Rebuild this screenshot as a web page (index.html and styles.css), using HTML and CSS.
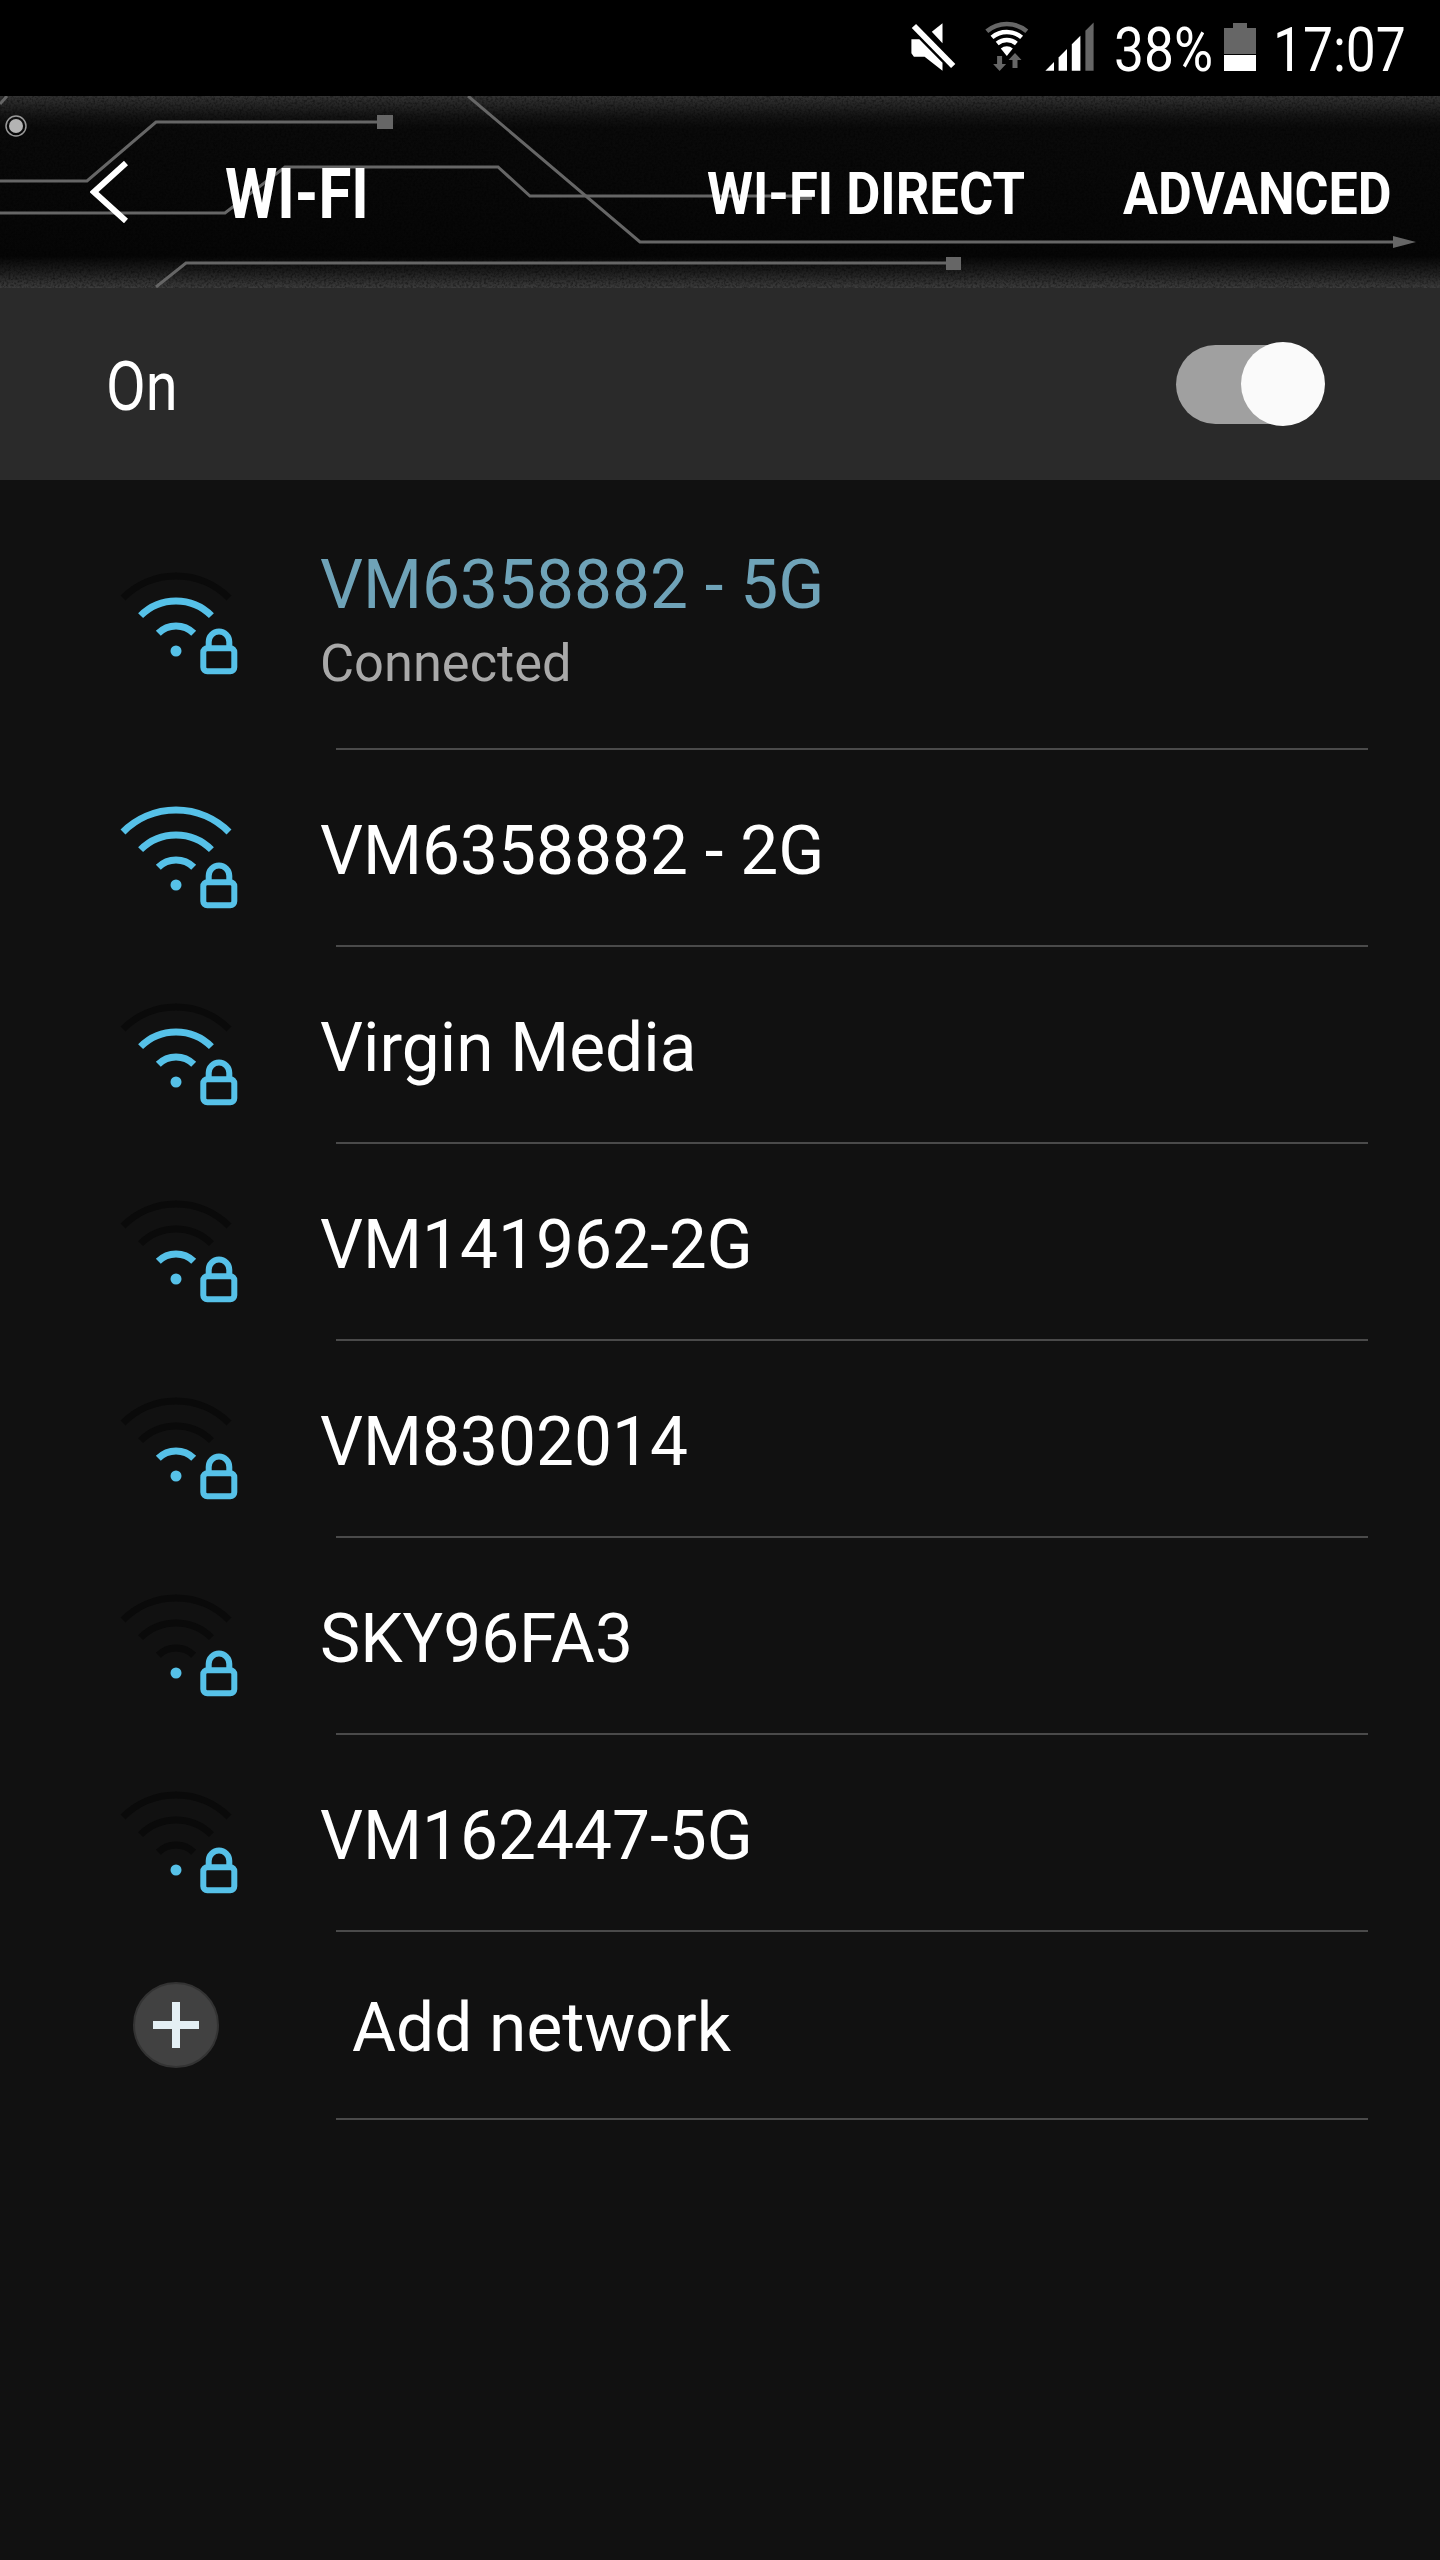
FILE: index.html
```html
<!DOCTYPE html>
<html lang="en">
<head>
  <meta charset="UTF-8">
  <title>Wi-Fi</title>
  <link rel="stylesheet" href="styles.css">
</head>
<body>
  <div class="status-bar">
    <svg class="st-mute" viewBox="0 0 50 54">
      <path class="white" d="M3.4 19.3H11.3L34.5 42.7V50.7L16.6 36.7H5.9L3.4 33.3Z"/>
      <path class="white" d="M23.8 11.7L34.5 3.3V23.3Z"/>
      <path class="slash" d="M5.9 6L45.2 46"/>
    </svg>
    <svg class="st-wifi" viewBox="0 0 48 54">
      <path class="arc-dim" d="M1.8 11.3A31 31 0 0 1 41.8 11.3"/>
      <path class="arc-lit" d="M7 17.4A23 23 0 0 1 36.6 17.4"/>
      <path class="arc-lit" d="M12.2 23.5A15 15 0 0 1 31.4 23.5"/>
      <path class="white" d="M21.8 36L15.8 28.5A9 9 0 0 1 27.8 28.5Z"/>
      <path class="dim" d="M14.6 51l-6.5-7h4v-8h5v8h4Z"/>
      <path class="dim" d="M30 33l6.5 7h-4v8h-5v-8h-4Z"/>
    </svg>
    <svg class="st-signal" viewBox="0 0 50 50">
      <path class="white" d="M0.4 48.7L9 40V48.7Z"/>
      <path class="white" d="M13.6 35.5L22 27V48.7H13.6Z"/>
      <path class="white" d="M26.8 22.3L35.4 13.7V48.7H26.8Z"/>
      <path class="dim" d="M40.4 8.7L48.6 0.5V48.7H40.4Z"/>
    </svg>
    <span class="st-text st-percent">38%</span>
    <svg class="st-battery" viewBox="0 0 32 48">
      <rect class="dim" x="9" y="0" width="14" height="5"/>
      <rect class="dim" x="0" y="5" width="32" height="26"/>
      <rect class="white" x="0" y="32" width="32" height="16"/>
    </svg>
    <span class="st-text st-time">17:07</span>
  </div>

  <div class="header">
    <svg class="circuit" viewBox="0 0 1440 192">
      <filter id="grain">
        <feTurbulence type="fractalNoise" baseFrequency=".45" numOctaves="2"/>
        <feColorMatrix values="0 0 0 0 0  0 0 0 0 0  0 0 0 0 0  0 0 0 2 -0.8"/>
      </filter>
      <rect class="grain" width="1440" height="192" filter="url(#grain)"/>
      <path d="M393 26H156L87 85H0"/>
      <path d="M0 117H225L285 71H498L530 100H812"/>
      <path d="M468 0L640 146H1393"/>
      <path d="M156 191L186 167H946"/>
      <path d="M0 8L7 0"/>
      <rect x="377" y="19" width="16" height="14"/>
      <rect x="946" y="161" width="15" height="13"/>
      <rect x="800" y="96" width="12" height="8"/>
      <polygon points="1393,140 1416,146 1393,152"/>
      <circle class="ring" cx="16" cy="30" r="10"/>
      <circle class="core" cx="16" cy="30" r="7"/>
    </svg>
    <svg class="back" viewBox="0 0 38 62"><path d="M36 2L4 31L36 60"/></svg>
    <span class="title">WI-FI</span>
    <span class="action action-direct">WI-FI DIRECT</span>
    <span class="action action-advanced">ADVANCED</span>
  </div>

  <div class="switch-bar">
    <span class="switch-label">On</span>
    <div class="toggle"><div class="toggle-knob"></div></div>
  </div>

  <div class="list">
    <div class="row row-connected">
      <svg class="wifi" viewBox="0 0 130 134">
        <path class="off" d="M13 51A75 75 0 0 1 119 51"/>
        <path class="on" d="M30.6 68.6A50 50 0 0 1 101.4 68.6"/>
        <path class="on" d="M48.3 86.3A25 25 0 0 1 83.7 86.3"/>
        <circle cx="66" cy="104" r="5.5"/>
        <path class="on thin" d="M98.7 101V94.9A10.3 10.3 0 0 1 119.3 94.9V101"/>
        <rect class="on thin" x="93.3" y="101.3" width="31" height="23" rx="4"/>
      </svg>
      <div class="row-text">
        <div class="name name-connected">VM6358882 - 5G</div>
        <div class="sub">Connected</div>
      </div>
    </div>
    <hr class="sep">
    <div class="row">
      <svg class="wifi" viewBox="0 0 130 134">
        <path class="on" d="M13 51A75 75 0 0 1 119 51"/>
        <path class="on" d="M30.6 68.6A50 50 0 0 1 101.4 68.6"/>
        <path class="on" d="M48.3 86.3A25 25 0 0 1 83.7 86.3"/>
        <circle cx="66" cy="104" r="5.5"/>
        <path class="on thin" d="M98.7 101V94.9A10.3 10.3 0 0 1 119.3 94.9V101"/>
        <rect class="on thin" x="93.3" y="101.3" width="31" height="23" rx="4"/>
      </svg>
      <div class="name">VM6358882 - 2G</div>
    </div>
    <hr class="sep">
    <div class="row">
      <svg class="wifi" viewBox="0 0 130 134">
        <path class="off" d="M13 51A75 75 0 0 1 119 51"/>
        <path class="on" d="M30.6 68.6A50 50 0 0 1 101.4 68.6"/>
        <path class="on" d="M48.3 86.3A25 25 0 0 1 83.7 86.3"/>
        <circle cx="66" cy="104" r="5.5"/>
        <path class="on thin" d="M98.7 101V94.9A10.3 10.3 0 0 1 119.3 94.9V101"/>
        <rect class="on thin" x="93.3" y="101.3" width="31" height="23" rx="4"/>
      </svg>
      <div class="name">Virgin Media</div>
    </div>
    <hr class="sep">
    <div class="row">
      <svg class="wifi" viewBox="0 0 130 134">
        <path class="off" d="M13 51A75 75 0 0 1 119 51"/>
        <path class="off" d="M30.6 68.6A50 50 0 0 1 101.4 68.6"/>
        <path class="on" d="M48.3 86.3A25 25 0 0 1 83.7 86.3"/>
        <circle cx="66" cy="104" r="5.5"/>
        <path class="on thin" d="M98.7 101V94.9A10.3 10.3 0 0 1 119.3 94.9V101"/>
        <rect class="on thin" x="93.3" y="101.3" width="31" height="23" rx="4"/>
      </svg>
      <div class="name">VM141962-2G</div>
    </div>
    <hr class="sep">
    <div class="row">
      <svg class="wifi" viewBox="0 0 130 134">
        <path class="off" d="M13 51A75 75 0 0 1 119 51"/>
        <path class="off" d="M30.6 68.6A50 50 0 0 1 101.4 68.6"/>
        <path class="on" d="M48.3 86.3A25 25 0 0 1 83.7 86.3"/>
        <circle cx="66" cy="104" r="5.5"/>
        <path class="on thin" d="M98.7 101V94.9A10.3 10.3 0 0 1 119.3 94.9V101"/>
        <rect class="on thin" x="93.3" y="101.3" width="31" height="23" rx="4"/>
      </svg>
      <div class="name">VM8302014</div>
    </div>
    <hr class="sep">
    <div class="row">
      <svg class="wifi" viewBox="0 0 130 134">
        <path class="off" d="M13 51A75 75 0 0 1 119 51"/>
        <path class="off" d="M30.6 68.6A50 50 0 0 1 101.4 68.6"/>
        <path class="off" d="M48.3 86.3A25 25 0 0 1 83.7 86.3"/>
        <circle cx="66" cy="104" r="5.5"/>
        <path class="on thin" d="M98.7 101V94.9A10.3 10.3 0 0 1 119.3 94.9V101"/>
        <rect class="on thin" x="93.3" y="101.3" width="31" height="23" rx="4"/>
      </svg>
      <div class="name">SKY96FA3</div>
    </div>
    <hr class="sep">
    <div class="row">
      <svg class="wifi" viewBox="0 0 130 134">
        <path class="off" d="M13 51A75 75 0 0 1 119 51"/>
        <path class="off" d="M30.6 68.6A50 50 0 0 1 101.4 68.6"/>
        <path class="off" d="M48.3 86.3A25 25 0 0 1 83.7 86.3"/>
        <circle cx="66" cy="104" r="5.5"/>
        <path class="on thin" d="M98.7 101V94.9A10.3 10.3 0 0 1 119.3 94.9V101"/>
        <rect class="on thin" x="93.3" y="101.3" width="31" height="23" rx="4"/>
      </svg>
      <div class="name">VM162447-5G</div>
    </div>
    <hr class="sep">
    <div class="row row-add">
      <div class="add-icon"><div class="add-plus"></div></div>
      <div class="name name-add">Add network</div>
    </div>
    <hr class="sep">
  </div>
</body>
</html>
```

FILE: styles.css
```css
html, body { margin: 0; padding: 0; height: 2560px; overflow: hidden; background: #111; font-family: Roboto, sans-serif; color: #fff; }

.status-bar { height: 96px; box-sizing: border-box; background: #000; display: flex; align-items: center; justify-content: flex-end; padding: 0 37px 2px 0; }
.status-bar svg { display: block; flex: none; }
.white { fill: #fff; }
.dim { fill: #666; }
.slash { stroke: #fff; stroke-width: 6; fill: none; }
.arc-dim { stroke: #666; stroke-width: 4.5; fill: none; }
.arc-lit { stroke: #fff; stroke-width: 4.5; fill: none; }
.st-mute { width: 50px; height: 54px; }
.st-wifi { width: 48px; height: 54px; margin-left: 27px; }
.st-signal { width: 50px; height: 50px; margin-left: 12px; }
.st-battery { width: 32px; height: 48px; margin-left: 15px; }
.st-text { display: block; flex: none; font-size: 62px; line-height: 60px; margin-top: 6px; white-space: nowrap; transform: translateX(-3px) scaleX(.86); transform-origin: left center; }
.st-percent { width: 92px; margin-left: 22px; }
.st-time { width: 127px; margin-left: 20px; }

.header { position: relative; height: 192px; display: flex; align-items: center; background: linear-gradient(#323232 0, #141414 20px, #0a0a0a 32px, #060606 160px, #1c1c1c 175px, #3c3c3c 192px); font-weight: bold; }
.circuit { position: absolute; left: 0; top: 0; width: 1440px; height: 192px; }
.circuit path { stroke: #666; stroke-width: 3; fill: none; }
.circuit rect, .circuit polygon { fill: #666; }
.circuit .grain { fill: #000; opacity: .5; }
.circuit .ring { fill: none; stroke: #999; stroke-width: 1.5; }
.circuit .core { fill: #b4b4b4; }
.back { position: relative; width: 38px; height: 62px; margin-left: 90px; flex: none; }
.back path { stroke: #fff; stroke-width: 6; fill: none; }
.title, .action { position: relative; display: block; flex: none; padding-top: 3px; white-space: nowrap; transform-origin: left center; }
.title { font-size: 70px; width: 141px; margin-left: 97px; transform: scaleX(.855); }
.action { font-size: 59px; }
.action-direct { width: 316px; margin-left: 341px; transform: scaleX(.89); }
.action-advanced { width: 268px; margin-left: 100px; transform: scaleX(.88); }

.switch-bar { height: 192px; box-sizing: border-box; background: #2a2a2a; display: flex; align-items: center; justify-content: space-between; padding: 0 120px 0 106px; }
.switch-label { display: block; width: 70px; padding-top: 5px; font-size: 68px; transform: scaleX(.85); transform-origin: left center; }
.toggle { position: relative; width: 144px; height: 79px; border-radius: 40px; background: #a0a0a0; }
.toggle-knob { position: absolute; right: -5px; top: -3px; width: 84px; height: 84px; border-radius: 50%; background: #fafafa; }

.row { height: 195px; display: flex; align-items: center; padding-left: 110px; }
.row-connected { height: 268px; }
.wifi { display: block; flex: none; width: 130px; height: 134px; fill: #56c1e8; }
.wifi path, .wifi rect { fill: none; stroke-width: 7; }
.wifi .on { stroke: #56c1e8; }
.wifi .off { stroke: #0a0a0a; }
.wifi .thin { stroke-width: 6; }
.name { font-size: 67.6px; line-height: 78px; margin-left: 80px; white-space: nowrap; }
.row > .name { padding-top: 7px; }
.row-text { padding-top: 20px; }
.name-connected { color: #6fa3b8; }
.sub { margin-left: 80px; font-size: 52.4px; line-height: 78px; color: #a9a9a9; }
.sep { height: 2px; border: 0; margin: 0 72px 0 336px; background: #4a4a4a; }
.row-add { height: 186px; }
.add-icon { flex: none; width: 86px; height: 86px; box-sizing: border-box; margin-left: 23px; border: 2px solid #333; border-radius: 50%; background: #414141; position: relative; }
.add-plus { position: absolute; left: 18px; top: 37px; width: 46px; height: 8px; background: #e4eff4; }
.add-plus::after { content: ""; position: absolute; left: 19px; top: -19px; width: 8px; height: 46px; background: #e4eff4; }
.row > .name-add { margin-left: 133px; padding-top: 5px; }
```
